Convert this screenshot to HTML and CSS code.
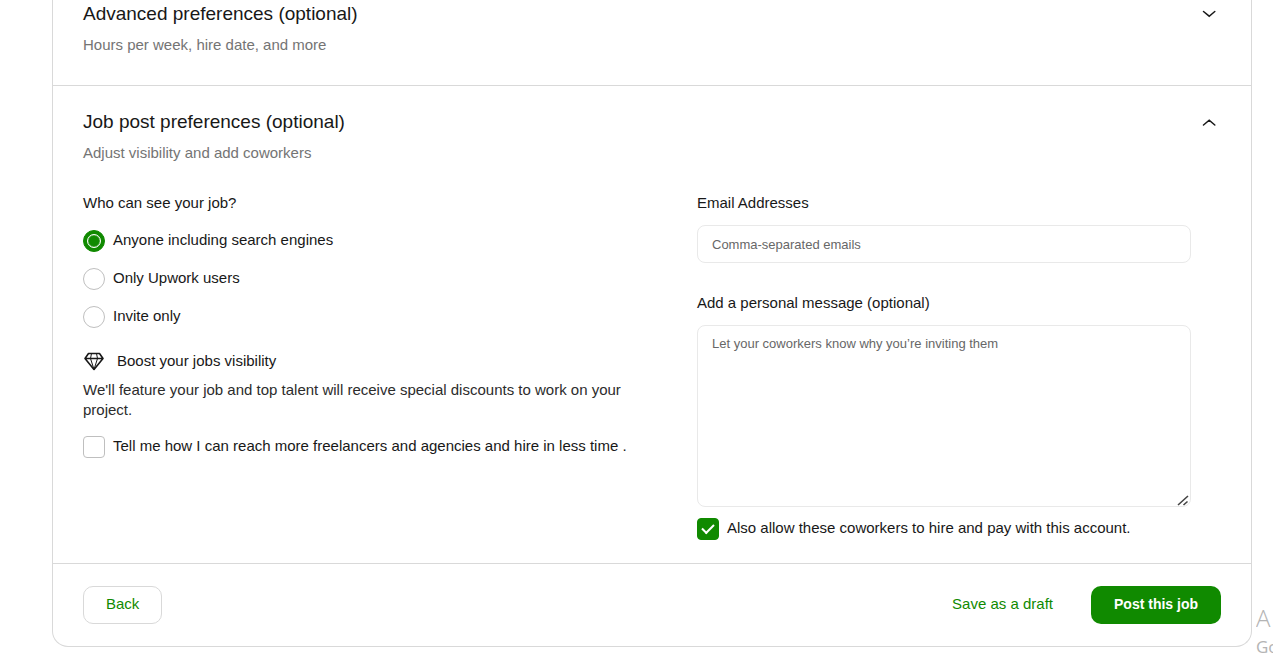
FILE: index.html
```html
<!DOCTYPE html>
<html lang="en">
<head>
<meta charset="utf-8">
<meta name="viewport" content="width=device-width, initial-scale=1">
<title>Post a job</title>
<link rel="stylesheet" href="styles.css">
</head>
<body>
<form class="card">
  <section class="section section-first">
    <div class="section-head">
      <h2 class="title">Advanced preferences (optional)</h2>
      <button class="toggle" type="button" aria-label="Expand advanced preferences">
        <svg width="14" height="8" viewBox="0 0 14 8" fill="none" stroke="#181818" stroke-width="1.5" stroke-linecap="round"><path d="M1.500 1.500 7.200 6.200l5.600-4.700"/></svg>
      </button>
    </div>
    <p class="subtitle">Hours per week, hire date, and more</p>
  </section>

  <section class="section">
    <div class="section-head">
      <h2 class="title">Job post preferences (optional)</h2>
      <button class="toggle" type="button" aria-label="Collapse job post preferences">
        <svg width="14" height="8" viewBox="0 0 14 8" fill="none" stroke="#181818" stroke-width="1.5" stroke-linecap="round"><path d="M1.500 7 7.200 2.200l5.600 4.800"/></svg>
      </button>
    </div>
    <p class="subtitle">Adjust visibility and add coworkers</p>

    <div class="columns">
      <div class="visibility">
        <fieldset class="options">
          <legend class="label">Who can see your job?</legend>
          <label class="choice"><input class="radio" type="radio" name="who" checked><span>Anyone including search engines</span></label>
          <label class="choice"><input class="radio" type="radio" name="who"><span>Only Upwork users</span></label>
          <label class="choice"><input class="radio" type="radio" name="who"><span>Invite only</span></label>
        </fieldset>
        <div class="boost">
          <svg width="22" height="20" viewBox="0 0 22 20" fill="none" stroke="#181818" stroke-linejoin="round"><path stroke-width="1.600" d="M5.500 2.500h11l3.500 5L11 18.500 2 7.500zM2 7.500h18"/><path d="M8.500 2.500 7.500 7.500 11 18.500l3.500-11-1-5"/></svg>
          <span>Boost your jobs visibility</span>
        </div>
        <p class="boost-text">We'll feature your job and top talent will receive special discounts to work on your project.</p>
        <label class="choice"><input class="check" type="checkbox"><span>Tell me how I can reach more freelancers and agencies and hire in less time .</span></label>
      </div>

      <div class="invite">
        <label class="label" for="emails">Email Addresses</label>
        <input class="field" id="emails" type="text" placeholder="Comma-separated emails">
        <label class="label label-message" for="message">Add a personal message (optional)</label>
        <div class="message-box">
          <textarea class="field message" id="message" placeholder="Let your coworkers know why you’re inviting them"></textarea>
          <svg class="grip" width="12" height="12" viewBox="0 0 12 12" stroke="#444" stroke-width="1.600"><path d="M1 11 11 2M6.500 11 10.500 7.500"/></svg>
        </div>
        <label class="choice"><input class="check" type="checkbox" checked><span>Also allow these coworkers to hire and pay with this account.</span></label>
      </div>
    </div>
  </section>

  <footer class="actions">
    <button class="btn btn-outline" type="button">Back</button>
    <button class="btn btn-text" type="button">Save as a draft</button>
    <button class="btn btn-primary" type="submit">Post this job</button>
  </footer>
</form>
<div class="watermark" aria-hidden="true"><div class="watermark-title">A</div><div>Go</div></div>
</body>
</html>
```
FILE: styles.css
```css
* { box-sizing: border-box; }
body {
  margin: 0;
  background: #fff;
  color: #181818;
  font: 15px/20px "Liberation Sans", Arial, sans-serif;
  overflow-x: hidden;
}
h2, p, fieldset, legend { margin: 0; padding: 0; border: 0; }
button, input, textarea { font: inherit; margin: 0; }
svg { display: block; flex: none; }

.card {
  margin: 0 21px 20px 52px;
  border: 1px solid #d9d9d9;
  border-top: 0;
  border-radius: 0 0 16px 16px;
}
.section { padding: 22px 30px 23px; border-bottom: 1px solid #d9d9d9; }
.section-first { padding: 0 30px 30px; }
.section-head { display: flex; justify-content: space-between; align-items: center; }
.title { font-size: 19px; line-height: 28px; font-weight: 400; }
.toggle { display: grid; place-items: center; width: 24px; height: 24px; padding: 0; border: 0; background: none; }
.subtitle { margin-top: 7px; color: #747474; }

.columns { display: grid; grid-template-columns: 1fr 1fr; gap: 30px; margin-top: 30px; }
.options { display: grid; gap: 16px; min-width: 0; }
.label { display: block; }
legend.label { margin-bottom: 17px; }
.choice { display: flex; align-items: center; gap: 8px; height: 22px; }
.choice span { padding-bottom: 2px; white-space: nowrap; }
.radio, .check {
  appearance: none;
  flex: none;
  display: grid;
  place-items: center;
  width: 22px;
  height: 22px;
  border: 1px solid #bfbfbf;
  background: #fff;
}
.radio { border-radius: 50%; }
.check { border-radius: 4px; }
.radio:checked, .check:checked { border-color: #108a00; background: #108a00; }
.radio:checked::before {
  content: "";
  width: 12px;
  height: 12px;
  border: 1px solid #fff;
  border-radius: 50%;
  box-shadow: inset 0 0 1px #fff;
}
.check:checked::before {
  content: "";
  width: 10px;
  height: 5px;
  margin-bottom: 3px;
  border: solid #fff;
  border-width: 0 0 2px 2px;
  transform: rotate(-45deg);
}

.boost { display: flex; gap: 12px; margin-top: 23px; }
.boost-text { margin: 9px 0 16px; padding-right: 8px; color: #2c2c2c; }

.invite { padding: 0 30px; }
.field {
  display: block;
  width: 100%;
  height: 38px;
  margin-top: 12px;
  padding: 8px 14px;
  border: 1px solid #e9e9e9;
  border-radius: 8px;
  background: #fff;
  color: #181818;
  font-size: 13px;
}
.field::placeholder { color: #676767; opacity: 1; }
.label-message { margin-top: 30px; }
.message-box { position: relative; margin-bottom: 11px; }
.message { height: 182px; resize: none; }
.grip { position: absolute; right: 2px; bottom: 1px; }

.actions { display: flex; align-items: center; padding: 22px 30px; }
.btn { height: 38px; padding: 0 22px 2px; border: 1px solid transparent; border-radius: 10px; background: none; color: #108a00; }
.btn-outline { border-color: #d9d9d9; margin-right: auto; }
.btn-text { margin-right: 15px; }
.btn-primary { background: #108a00; color: #fff; font-size: 14px; font-weight: 700; }

.watermark {
  position: absolute;
  left: 1256px;
  right: 0;
  top: 602px;
  overflow: hidden;
  color: #b4b4b4;
  font: 400 17px/26px "Open Sans", sans-serif;
}
.watermark-title { font-size: 24px; font-weight: 300; line-height: 32px; }
```
